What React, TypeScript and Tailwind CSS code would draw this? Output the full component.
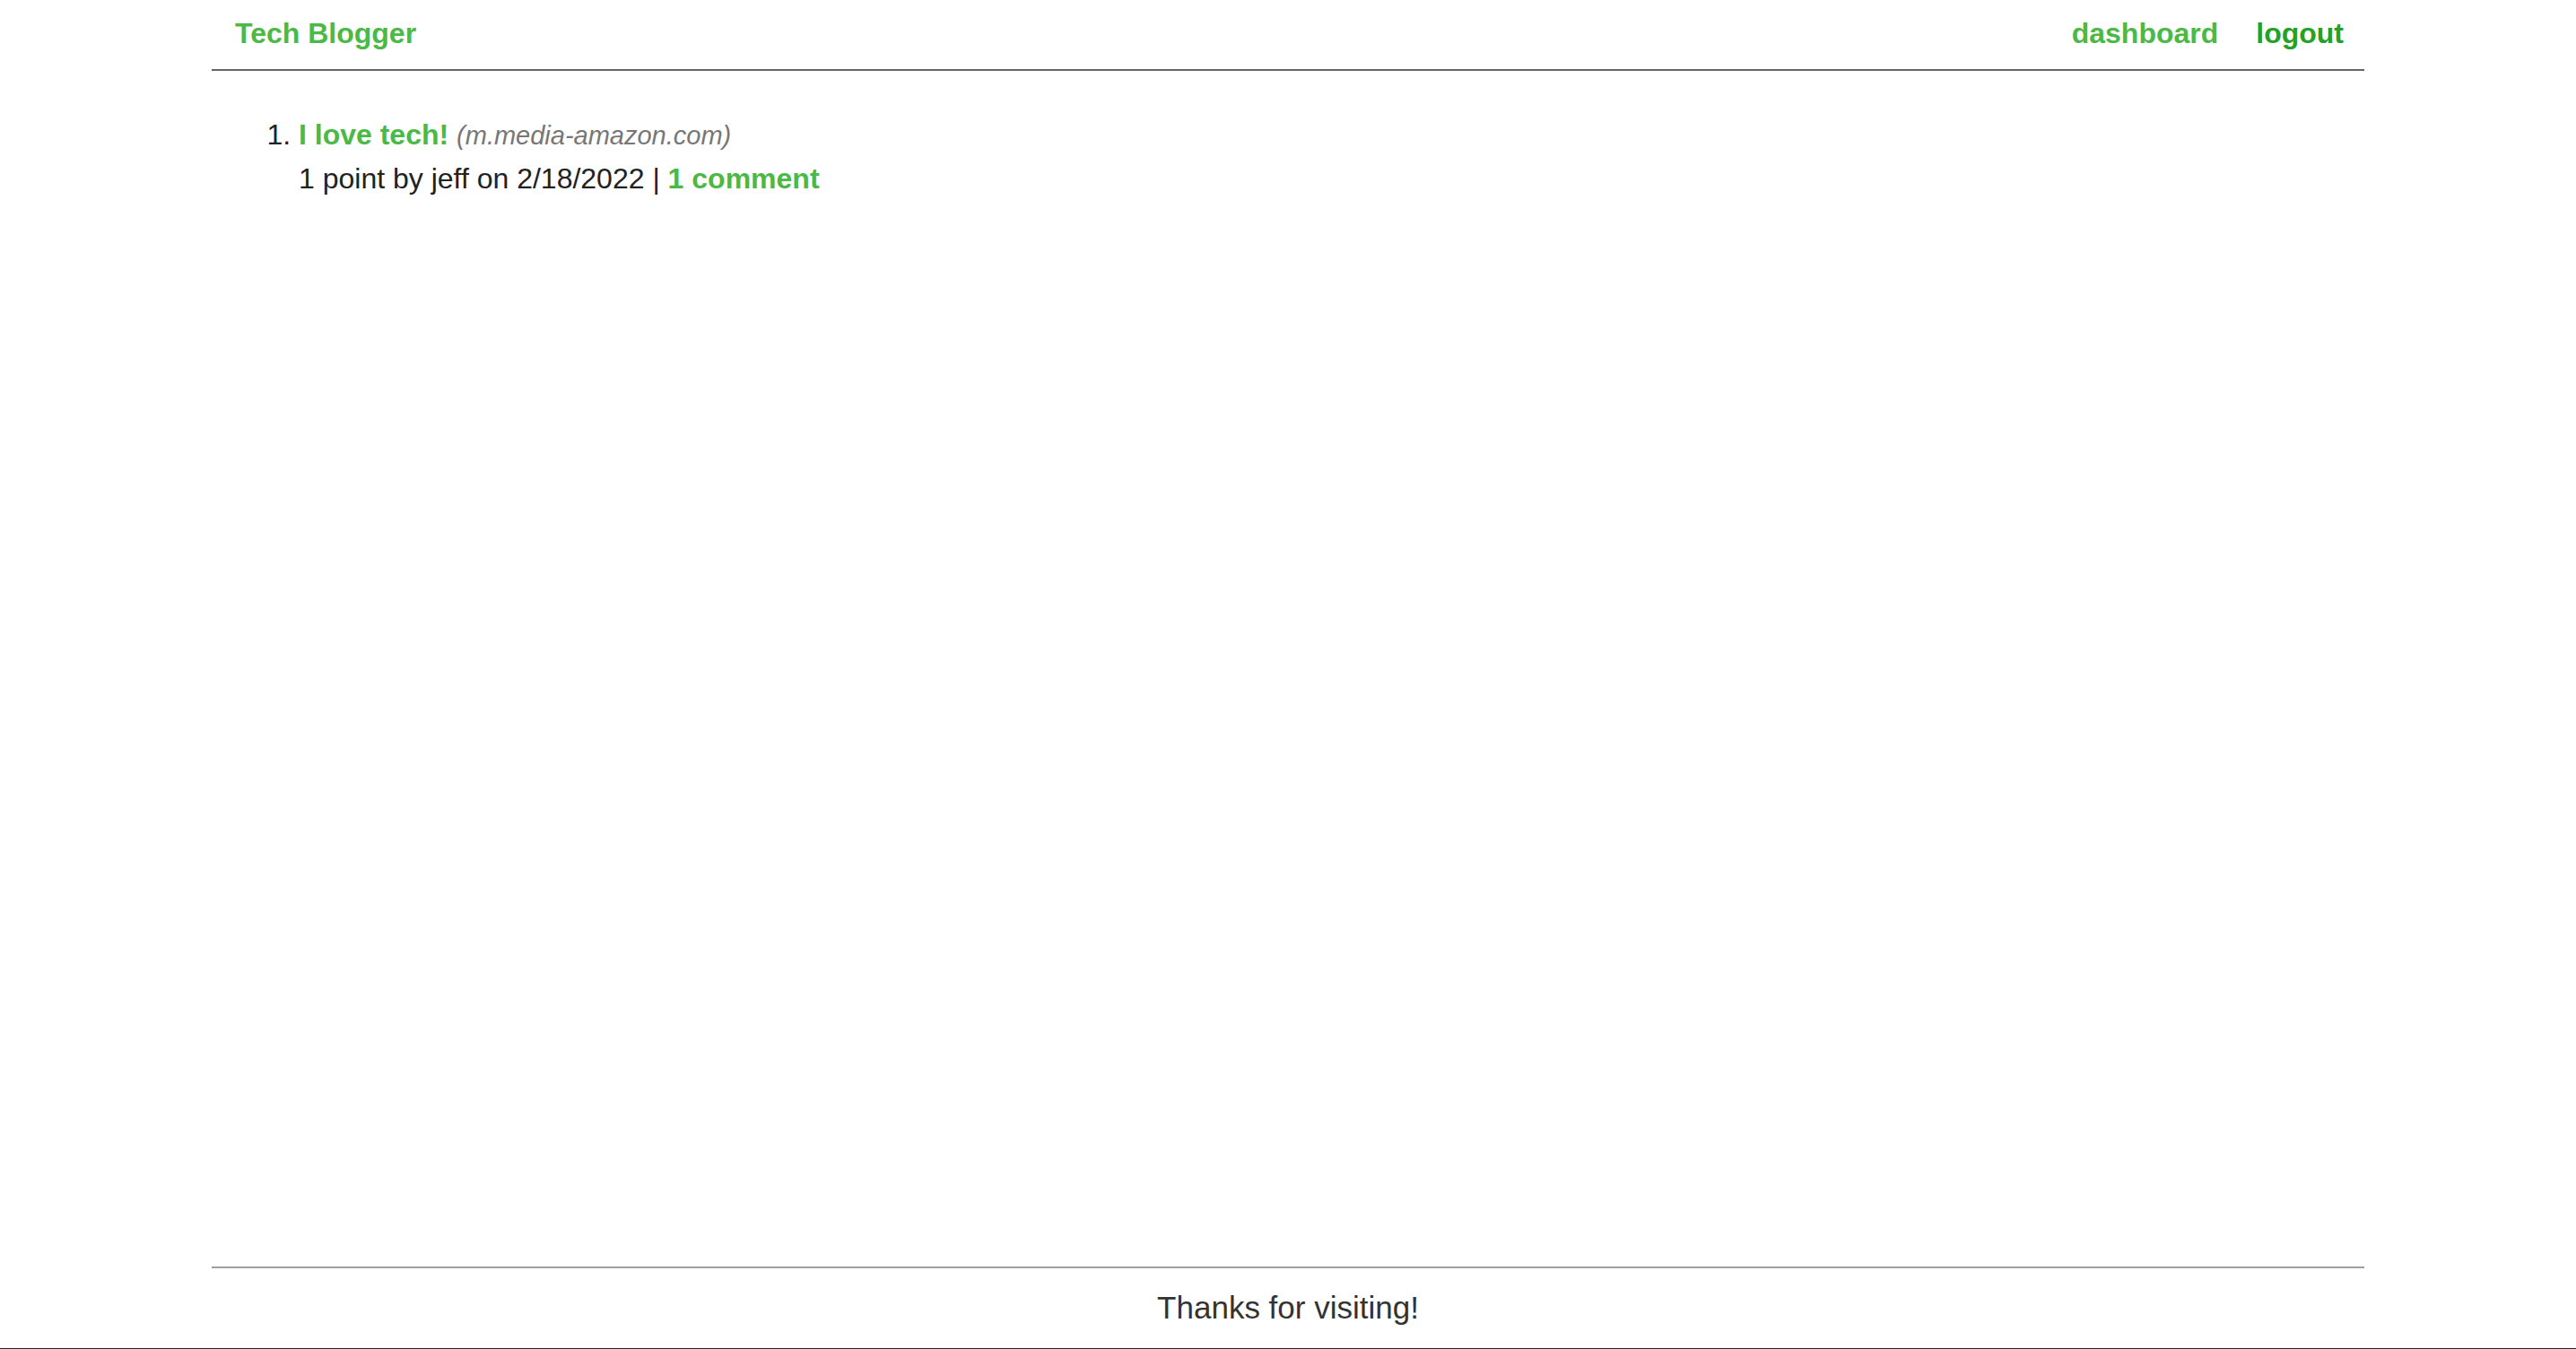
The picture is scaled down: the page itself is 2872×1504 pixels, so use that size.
// Tech Blogger home page: header, post list, footer
const posts = [
  {
    id: 1,
    title: "I love tech!",
    domain: "m.media-amazon.com",
    points: 1,
    author: "jeff",
    date: "2/18/2022",
    comments: 1,
  },
];

export default function App() {
  return (
    <div
      className="flex min-h-screen flex-col bg-white text-[#222]"
      style={{ fontFamily: '"Liberation Sans", Arial, sans-serif' }}
    >
      <header className="mx-auto flex h-[79px] w-full max-w-[2400px] items-center justify-between border-b-2 border-[#666] pb-[3px] pl-[26px] pr-[23px]">
        <a className="text-[32px] font-bold text-[#4ab946]">Tech Blogger</a>
        <nav className="flex gap-[42px] text-[32px] font-bold">
          <a className="text-[#4ab946]">dashboard</a>
          <a className="text-[#24a224]">logout</a>
        </nav>
      </header>

      <main className="mx-auto w-full max-w-[2400px] flex-1">
        <ol className="mt-[47px] list-decimal pl-[97px] text-[32px] leading-[48px]">
          {posts.map((post) => (
            <li key={post.id}>
              <div>
                <a className="font-bold text-[#4ab946]">{post.title}</a>{" "}
                <span className="text-[29px] italic text-[#777]">({post.domain})</span>
              </div>
              <div>
                {post.points} point by {post.author} on {post.date} |{" "}
                <a className="font-bold text-[#4ab946]">
                  {post.comments} comment{post.comments === 1 ? "" : "s"}
                </a>
              </div>
            </li>
          ))}
        </ol>
      </main>

      <footer className="border-b border-[#222]">
        <div className="mx-auto flex h-[91px] w-full max-w-[2400px] items-center justify-center border-t-2 border-[#a0a0a0] text-[35px] text-[#333]">
          Thanks for visiting!
        </div>
      </footer>
    </div>
  );
}
